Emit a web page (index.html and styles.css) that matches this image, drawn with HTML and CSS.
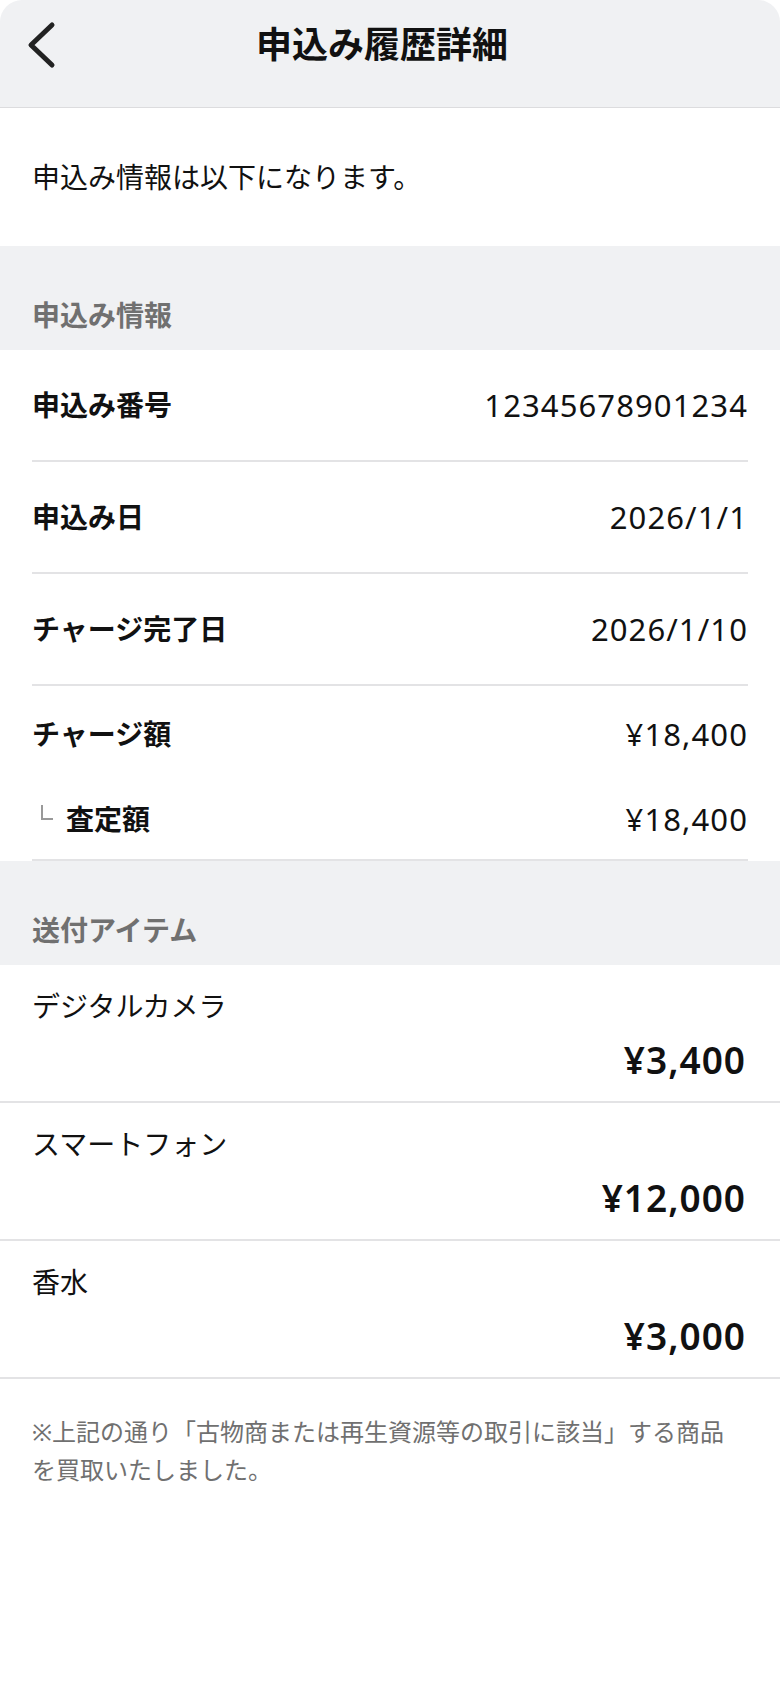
FILE: index.html
```html
<!DOCTYPE html>
<html lang="ja">
<head>
  <meta charset="UTF-8" />
  <title>申込み履歴詳細</title>
  <meta name="viewport" content="width=device-width, initial-scale=1.0" />
  <link rel="stylesheet" href="styles.css">
</head>
<body>
  <header class="topbar">
    <button class="back" aria-label="戻る">
      <svg width="34" height="50" viewBox="0 0 34 50">
        <path d="M26 5 L5 25 L26 45" fill="none" stroke="#222" stroke-width="5" stroke-linecap="round" stroke-linejoin="round" />
      </svg>
    </button>
    <h1>申込み履歴詳細</h1>
    <span class="spacer"></span>
  </header>

  <p class="intro">申込み情報は以下になります。</p>

  <h2 class="section-title">申込み情報</h2>
  <div class="info">
    <div class="row">
      <span class="label">申込み番号</span>
      <span class="value">12345678901234</span>
    </div>
    <div class="row">
      <span class="label">申込み日</span>
      <span class="value">2026/1/1</span>
    </div>
    <div class="row">
      <span class="label">チャージ完了日</span>
      <span class="value">2026/1/10</span>
    </div>
    <div class="charge">
      <div class="row main">
        <span class="label">チャージ額</span>
        <span class="value">¥18,400</span>
      </div>
      <div class="row sub">
        <span class="label"><span class="corner"></span>査定額</span>
        <span class="value">¥18,400</span>
      </div>
    </div>
  </div>

  <h2 class="section-title">送付アイテム</h2>
  <ul class="items">
    <li class="item">
      <span class="item-name">デジタルカメラ</span>
      <span class="item-price">¥3,400</span>
    </li>
    <li class="item">
      <span class="item-name">スマートフォン</span>
      <span class="item-price">¥12,000</span>
    </li>
    <li class="item">
      <span class="item-name">香水</span>
      <span class="item-price">¥3,000</span>
    </li>
  </ul>

  <p class="note">※上記の通り「古物商または再生資源等の取引に該当」する商品を買取いたしました。</p>
</body>
</html>
```

FILE: styles.css
```css
:root {
  --bg-gray: #f0f1f3;
  --line: #e3e3e5;
  --text: #111;
  --sub-text: #707070;
}
* {
  box-sizing: border-box;
}
body {
  margin: 0;
  background: #fff;
  color: var(--text);
  font-family: "Noto Sans", "Noto Sans CJK JP", sans-serif;
}
.topbar {
  height: 108px;
  padding-bottom: 18px;
  display: flex;
  align-items: center;
  background: var(--bg-gray);
  border-bottom: 1px solid #dcdcde;
  border-radius: 22px 22px 0 0;
}
.back {
  width: 80px;
  height: 60px;
  padding: 0 0 0 26px;
  display: flex;
  align-items: center;
  background: none;
  border: none;
}
.topbar h1 {
  flex: 1;
  margin: 0;
  text-align: center;
  font-size: 36px;
  font-weight: 700;
  line-height: 48px;
}
.spacer {
  width: 96px;
}
.intro {
  margin: 0;
  padding: 49px 32px;
  font-size: 28px;
  line-height: 40px;
}
.section-title {
  margin: 0;
  padding: 49px 32px 15px;
  background: var(--bg-gray);
  color: var(--sub-text);
  font-size: 28px;
  font-weight: 600;
  line-height: 40px;
}
.info {
  padding: 0 32px;
}
.row {
  display: flex;
  align-items: center;
  justify-content: space-between;
  height: 112px;
  border-bottom: 2px solid var(--line);
}
.charge {
  padding-top: 4px;
  border-bottom: 2px solid var(--line);
}
.charge .row {
  border-bottom: none;
}
.row.main {
  height: 88px;
}
.row.sub {
  height: 81px;
}
.label {
  display: flex;
  align-items: center;
  font-size: 28px;
  font-weight: 700;
  line-height: 40px;
}
.corner {
  width: 12px;
  height: 15px;
  margin: 0 13px 12px 9px;
  border-left: 2px solid #999;
  border-bottom: 2px solid #999;
}
.value {
  font-size: 31px;
  letter-spacing: 1.1px;
  line-height: 40px;
}
.items {
  margin: 0;
  padding: 0;
  list-style: none;
}
.item {
  display: flex;
  flex-direction: column;
  padding: 21px 34px 19px 32px;
  border-bottom: 2px solid var(--line);
}
.item-name {
  font-size: 28px;
  line-height: 40px;
}
.item-price {
  margin-top: 12px;
  text-align: right;
  font-size: 37px;
  font-weight: 600;
  letter-spacing: 1px;
  line-height: 44px;
}
.note {
  margin: 0;
  padding: 34px 32px;
  color: var(--sub-text);
  font-size: 24px;
  line-height: 38px;
}
```
